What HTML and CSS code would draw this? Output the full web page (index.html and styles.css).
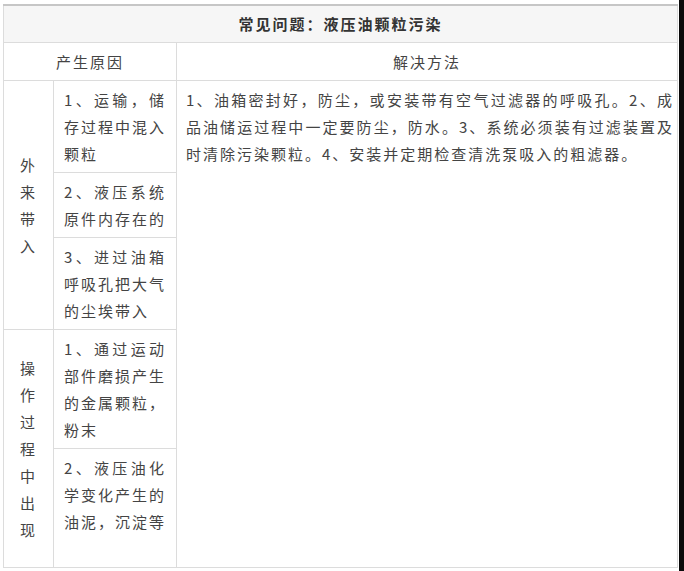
FILE: index.html
```html
<!DOCTYPE html>
<html lang="zh">
<head>
<meta charset="utf-8">
<link rel="stylesheet" href="styles.css">
</head>
<body>
<div class="page">
  <table class="faq">
    <colgroup><col class="c1"><col class="c2"><col class="c3"></colgroup>
    <tr class="title-row"><th colspan="3">常见问题：液压油颗粒污染</th></tr>
    <tr class="head-row"><td colspan="2" class="center">产生原因</td><td class="center">解决方法</td></tr>
    <tr>
      <td rowspan="3" class="group">外来带入</td>
      <td class="cause">1、运输，储存过程中混入颗粒</td>
      <td rowspan="5" class="solution">1、油箱密封好，防尘，或安装带有空气过滤器的呼吸孔。2、成品油储运过程中一定要防尘，防水。3、系统必须装有过滤装置及时清除污染颗粒。4、安装并定期检查清洗泵吸入的粗滤器。</td>
    </tr>
    <tr><td class="cause">2、液压系统原件内存在的</td></tr>
    <tr><td class="cause">3、进过油箱呼吸孔把大气的尘埃带入</td></tr>
    <tr>
      <td rowspan="2" class="group">操作过程中出现</td>
      <td class="cause">1、通过运动部件磨损产生的金属颗粒，粉末</td>
    </tr>
    <tr><td class="cause tall">2、液压油化学变化产生的油泥，沉淀等</td></tr>
  </table>
</div>
</body>
</html>
```
FILE: styles.css
```css
html {
  margin: 0;
  padding: 0;
  background: linear-gradient(to right, #fff 679px, #0a0a0a 679px);
}
body {
  margin: 0;
  padding: 0;
  width: 679px;
  height: 571px;
  overflow: hidden;
  background: #fff;
  font-family: "Noto Sans CJK SC", "Noto Sans", sans-serif;
  color: #444;
}
.page {
  padding: 4px 2px 0 3px;
}
.faq {
  border-collapse: collapse;
  table-layout: fixed;
  width: 674px;
  font-size: 15px;
  line-height: 27px;
  letter-spacing: 2px;
}
.c1 { width: 50px; }
.c2 { width: 123px; }
.c3 { width: 501px; }
.faq th, .faq td {
  border: 1px solid #dcdcdc;
  padding: 5px 10px 5px;
  vertical-align: top;
  text-align: justify;
}
.faq .title-row th {
  border-top: 2px solid #c6c6c6;
  background: #f6f6f6;
  font-weight: bold;
  color: #333;
  text-align: center;
  height: 27px;
  padding: 4px 10px 5px;
  vertical-align: middle;
}
.faq .head-row td {
  height: 26px;
  padding: 5px 10px 5px;
  vertical-align: middle;
  text-align: center;
}
.faq td.solution {
  padding: 5px 3px 5px 9px;
}
.faq td.group {
  vertical-align: middle;
  text-align: center;
  padding: 5px 10px;
}
.faq td.tall {
  height: 108px;
}
```
